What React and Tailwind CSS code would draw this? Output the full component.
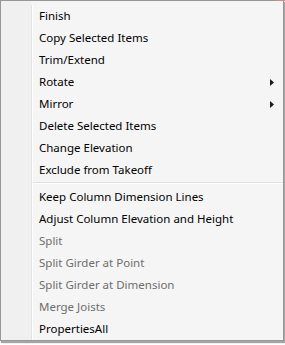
import React from "react";

const groups = [
  [
    { t: "Finish" },
    { t: "Copy Selected Items" },
    { t: "Trim/Extend" },
    { t: "Rotate", sub: true },
    { t: "Mirror", sub: true },
    { t: "Delete Selected Items" },
    { t: "Change Elevation" },
    { t: "Exclude from Takeoff" },
  ],
  [
    { t: "Keep Column Dimension Lines" },
    { t: "Adjust Column Elevation and Height" },
    { t: "Split", dis: true },
    { t: "Split Girder at Point", dis: true },
    { t: "Split Girder at Dimension", dis: true },
    { t: "Merge Joists", dis: true },
    { t: "PropertiesAll" },
  ],
];

function Row({ item }) {
  return (
    <div className="flex h-[22px] items-center">
      <div className="h-full w-[30px] shrink-0" />
      <div className="h-full w-px shrink-0 bg-[#e2e3e3]" />
      <div className="h-full w-px shrink-0 bg-white" />
      <div
        className={
          "ml-[6px] flex-1 text-[11.5px] leading-none " +
          (item.dis ? "text-[#6d6d6d]" : "text-[#000000]")
        }
      >
        {item.t}
      </div>
      {item.sub && (
        <svg width="4" height="7" viewBox="0 0 4 7" className="mr-[9px]">
          <path d="M0 0 L4 3.5 L0 7 Z" fill="#1a1a1a" />
        </svg>
      )}
    </div>
  );
}

export default function App() {
  return (
    <div
      className="relative h-[345px] w-[285px] bg-white"
      style={{ fontFamily: '"Noto Sans", "Open Sans", sans-serif' }}
    >
      <div className="absolute right-0 top-0 h-px w-[9px] bg-[#d48a8a]" />
      <div className="flex h-[341px] w-[284px] flex-col border border-[#979797] bg-[#f5f5f5] shadow-[1px_2px_1px_rgba(0,0,0,0.35)]">
        <div className="relative flex h-full flex-col">
          <div className="absolute left-0 top-0 h-full w-[30px] bg-[#f0f0f0]" />
          <div className="relative flex flex-col pt-[4px]">
            {groups[0].map((it) => (
              <Row key={it.t} item={it} />
            ))}
            <div className="flex h-[5px]">
              <div className="w-[30px] shrink-0" />
              <div className="w-px shrink-0 bg-[#e2e3e3]" />
              <div className="w-px shrink-0 bg-white" />
              <div className="flex flex-1 flex-col pt-px">
                <div className="h-px bg-[#e0e0e0]" />
                <div className="h-px bg-white" />
              </div>
            </div>
            {groups[1].map((it) => (
              <Row key={it.t} item={it} />
            ))}
          </div>
          <div className="flex flex-1">
            <div className="w-[30px] shrink-0" />
            <div className="w-px shrink-0 bg-[#e2e3e3]" />
            <div className="w-px shrink-0 bg-white" />
          </div>
        </div>
      </div>
    </div>
  );
}
